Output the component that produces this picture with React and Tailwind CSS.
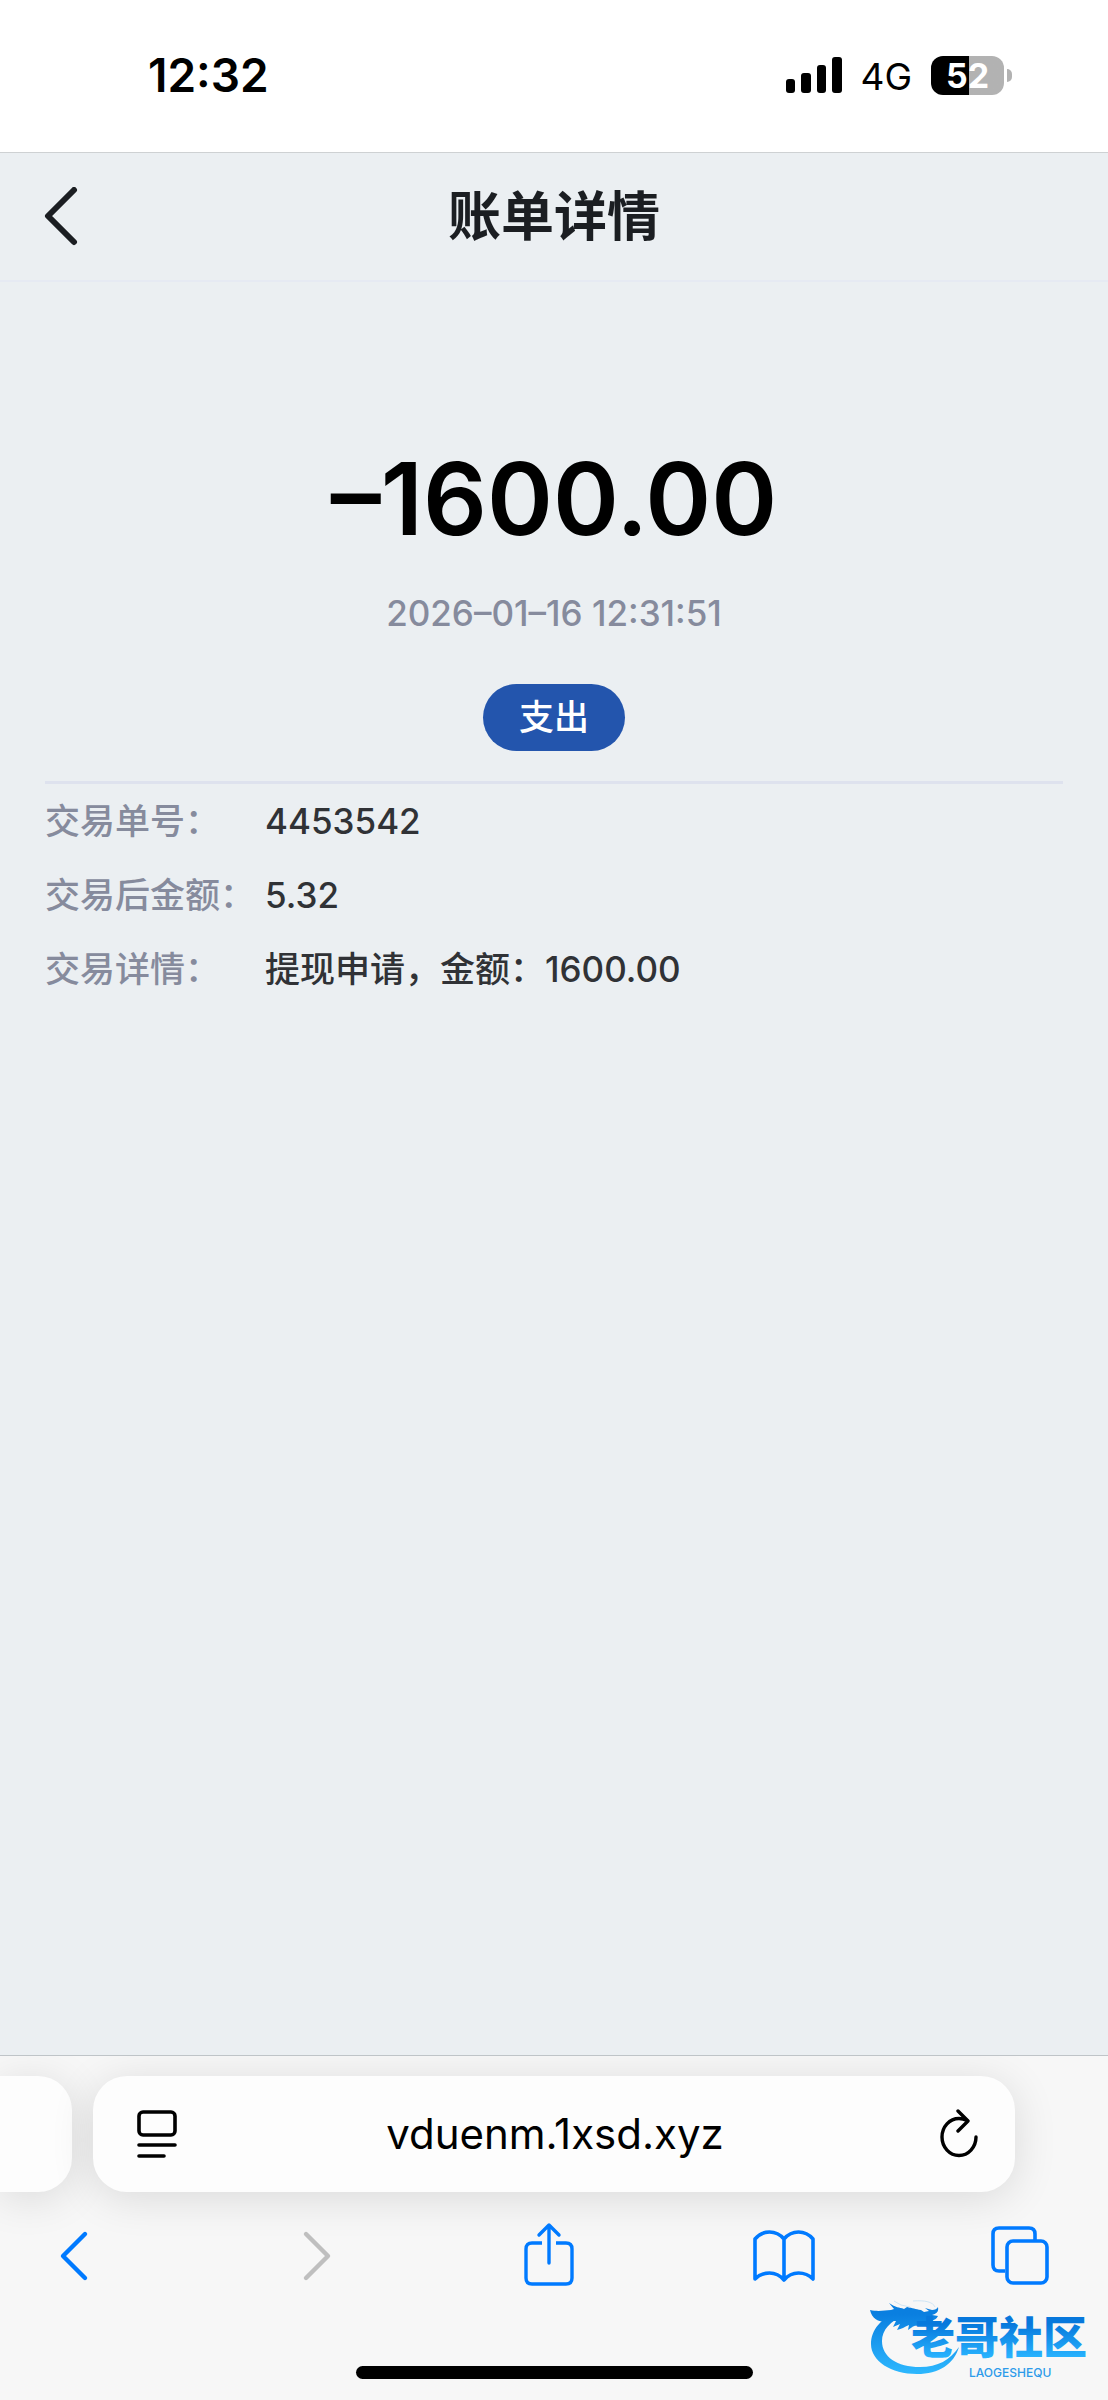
import React, { useState } from 'react';

const bill = {
  amount: '–1600.00',
  time: '2026–01–16 12:31:51',
  type: '支出',
  rows: [
    { label: '交易单号：', value: '4453542' },
    { label: '交易后金额：', value: '5.32' },
    { label: '交易详情：', value: '提现申请，金额：1600.00' },
  ],
};

const StatusBar = () => (
  <div className="flex h-[152px] items-start justify-between bg-white pt-[50px] pr-24 pl-[148px] text-black">
    <span className="text-[46px] leading-[50px] font-semibold">12:32</span>
    <div className="flex h-[50px] items-center">
      <svg className="h-[36px] w-[56px]" viewBox="0 0 56 36" fill="currentColor" aria-hidden="true">
        <rect x="0" y="22" width="9" height="14" rx="3" />
        <rect x="15" y="16" width="10" height="20" rx="3" />
        <rect x="31" y="8" width="9" height="28" rx="3" />
        <rect x="46" y="0" width="10" height="36" rx="3" />
      </svg>
      <span className="ml-[18px] pt-[3px] text-[37px] leading-[50px]">4G</span>
      <div className="ml-[19px] flex items-center gap-[3px]">
        <div className="flex h-[39px] w-[73px] items-center justify-center rounded-xl bg-linear-to-r from-black from-[52%] to-[#b2b2b2] to-[52%] text-[34px] leading-[39px] font-bold text-white">
          52
        </div>
        <div className="h-[13px] w-[5px] rounded-r-full bg-[#b2b2b2]" />
      </div>
    </div>
  </div>
);

const Header = () => (
  <header className="flex h-[130px] items-center justify-between border-t border-b-2 border-t-[#ced1d3] border-b-[#e6eaf3] px-[44px] text-[#1b1e22]">
    <button type="button" aria-label="返回" className="w-[36px] cursor-pointer">
      <svg className="h-[60px] w-[34px]" viewBox="0 0 34 60" fill="none" stroke="currentColor" strokeWidth="6" strokeLinecap="round" strokeLinejoin="round">
        <path d="M30 3 4 29l26 26" />
      </svg>
    </button>
    <h1 className="text-[53px] leading-[60px] font-bold">账单详情</h1>
    <div className="w-[36px]" />
  </header>
);

const BillDetail = () => (
  <main className="flex-1 px-[45px] pt-[167px]">
    <div className="flex flex-col items-center border-b-3 border-[#dee2ee] pb-[30px]">
      <p className="text-[100px] leading-[100px] font-semibold text-black">{bill.amount}</p>
      <p className="mt-11 text-[35px] leading-[40px] font-medium text-[#868b9d]">{bill.time}</p>
      <span className="mt-[51px] rounded-full bg-[#2355ad] px-9 text-[35px] leading-[67px] font-medium text-white">
        {bill.type}
      </span>
    </div>
    <dl className="flex flex-col gap-5 pt-[10px] text-[35px] leading-[54px] font-medium">
      {bill.rows.map((row) => (
        <div key={row.label} className="flex">
          <dt className="w-[220px] shrink-0 whitespace-nowrap text-[#868b9d]">{row.label}</dt>
          <dd className="text-[#303236]">{row.value}</dd>
        </div>
      ))}
    </dl>
  </main>
);

const AddressBar = () => {
  const [url, setUrl] = useState('vduenm.1xsd.xyz');

  return (
    <div className="flex gap-[21px] pt-5">
      {/* Edge of the previous tab */}
      <div className="h-[116px] w-[72px] rounded-r-[34px] bg-[#fdfdfd] shadow-[0_6px_44px_rgba(0,0,0,0.12)]" />
      <div className="mr-[93px] flex h-[116px] min-w-0 flex-1 items-center justify-between rounded-[34px] bg-[#fdfdfd] pr-[22px] pl-[36px] shadow-[0_6px_44px_rgba(0,0,0,0.12)]">
        <button type="button" aria-label="页面菜单" className="flex w-[56px] cursor-pointer justify-center">
          <svg className="h-[48px] w-[40px]" viewBox="0 0 40 48" fill="none" stroke="currentColor" strokeWidth="3.6" strokeLinecap="round">
            <rect x="2" y="2" width="36" height="23" rx="4" />
            <path d="M2 35h36M2 46h25" />
          </svg>
        </button>
        <input
          type="text"
          aria-label="网址"
          value={url}
          onChange={(e) => setUrl(e.target.value)}
          className="min-w-0 flex-1 bg-transparent text-center text-[42px] leading-[52px] text-black outline-none"
        />
        <button type="button" aria-label="刷新" className="flex w-[68px] cursor-pointer justify-center">
          <svg className="h-[50px] w-[40px]" viewBox="0 0 40 50" fill="none" stroke="currentColor" strokeWidth="3.4" strokeLinecap="round" strokeLinejoin="round">
            <path d="M37 28a17 18.500 0 1 1-17-18.500q4 0 8 2" />
            <path d="M19 2l10 10-10 10" />
          </svg>
        </button>
      </div>
    </div>
  );
};

const ToolBar = () => (
  <nav className="flex items-center justify-between pt-[30px] pr-[57px] pl-[43px] text-[#007aff]">
    <button type="button" aria-label="后退" className="flex w-[62px] cursor-pointer justify-center">
      <svg className="h-[64px] w-[32px]" viewBox="0 0 32 64" fill="none" stroke="currentColor" strokeWidth="4.4" strokeLinecap="round" strokeLinejoin="round">
        <path d="M27 12 5 34l22 22" />
      </svg>
    </button>
    <button type="button" aria-label="前进" disabled className="flex w-[62px] justify-center pl-3 text-[#bfbfbf]">
      <svg className="h-[64px] w-[32px]" viewBox="0 0 32 64" fill="none" stroke="currentColor" strokeWidth="4.4" strokeLinecap="round" strokeLinejoin="round">
        <path d="M5 12l22 22L5 56" />
      </svg>
    </button>
    <button type="button" aria-label="分享" className="flex w-[62px] cursor-pointer justify-center pl-1">
      <svg className="h-[64px] w-[50px]" viewBox="0 0 50 64" fill="none" stroke="currentColor" strokeWidth="3.4" strokeLinejoin="round">
        <path d="M18 21H8q-6 0-6 6v29q0 6 6 6h34q6 0 6-6V27q0-6-6-6H32" />
        <path d="M25 41V4M15 13 25 3l10 10" strokeLinecap="round" />
      </svg>
    </button>
    <button type="button" aria-label="书签" className="flex w-[62px] cursor-pointer justify-center">
      <svg className="h-[64px] w-[62px]" viewBox="0 0 62 64" fill="none" stroke="currentColor" strokeWidth="3.6" strokeLinecap="round" strokeLinejoin="round">
        <path d="M31 17q-6-7-14.500-7T2 17v40q6-6 14.500-6T31 58q6-7 14.500-7T60 57V17q-6-7-14.500-7T31 17v41" />
      </svg>
    </button>
    <button type="button" aria-label="标签页" className="flex w-[62px] cursor-pointer justify-center">
      <svg className="h-[64px] w-[58px]" viewBox="0 0 58 64" fill="none" stroke="currentColor" strokeWidth="3.6">
        <path d="M14 49H8q-6 0-6-6V12q0-6 6-6h30q6 0 6 6v6" />
        <rect x="16" y="19" width="40" height="42" rx="6" />
      </svg>
    </button>
  </nav>
);

const CommunityLogo = () => (
  <svg className="absolute right-[14px] bottom-[20px] h-[82px] w-[228px]" viewBox="0 0 228 82">
    <defs>
      <linearGradient id="logoBlue" x1="0" y1="0" x2="0" y2="82" gradientUnits="userSpaceOnUse">
        <stop offset="0.2" stopColor="#0a7fe0" />
        <stop offset="0.9" stopColor="#2cb6fd" />
      </linearGradient>
      <linearGradient id="wordBlue" x1="0" y1="26" x2="0" y2="60" gradientUnits="userSpaceOnUse">
        <stop offset="0" stopColor="#0778dc" />
        <stop offset="1" stopColor="#29b4ff" />
      </linearGradient>
    </defs>
    {/* Dragon body */}
    <path
      fill="url(#logoBlue)"
      d="M32 14C15 20 5 32 5 46c0 17 20 30 46 30 22 0 37-10 42-27-9 13-21 20-39 20-23 0-38-10-38-26 0-11 8-20 23-26z"
    />
    {/* Dragon head, horns and whiskers */}
    <path
      fill="url(#logoBlue)"
      d="M4 12c10 2 14 0 21 0l3-1-5-6c7 5 10 4 15 6l3-2c6 1 8 2 14 3l3 2 5-1-4-3 7 2c3 0 5-1 6-3 1 5-2 7-6 8l6 1c-2 4-5 5-9 4l6 2-2 4c-5 0-7-2-11-2l-4 2c-5-1-6 2-10 4l1-5c-5 2-7 4-12 5l3-6-7 3 3-6c-4 0-8-1-12 1-6-1-12-3-14-12z"
    />
    <path fill="none" stroke="#cfe5f5" d="M28 3q6 5 16 6M47 3c12-1 20 1 22 6" />
    <text x="45" y="56" fill="url(#wordBlue)" fontSize="44" fontWeight="900">
      老哥社区
    </text>
    <text x="103" y="79" fill="#2d9bea" fontSize="12" fontWeight="500">
      LAOGESHEQU
    </text>
  </svg>
);

const App = () => (
  <div className="flex min-h-screen flex-col bg-[#ebeff2] font-['Inter','Noto_Sans_CJK_SC',sans-serif]">
    <StatusBar />
    <Header />
    <BillDetail />
    <footer className="relative overflow-hidden border-t border-[#bfc4c8] bg-[#f7f7f7] text-black">
      <AddressBar />
      <ToolBar />
      <div className="mx-auto mt-[80px] mb-[21px] h-[13px] w-[397px] rounded-full bg-black" />
      <CommunityLogo />
    </footer>
  </div>
);

export default App;
